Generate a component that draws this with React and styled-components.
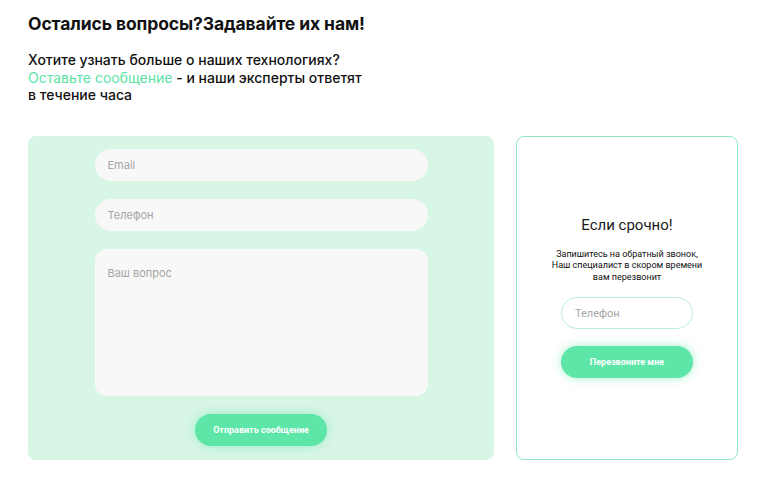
import React from 'react'
import styled, { createGlobalStyle } from 'styled-components'

const GlobalStyle = createGlobalStyle`
  body {
    margin: 0;
    background: #ffffff;
    font-family: Inter, "Noto Sans", sans-serif;
    color: #111;
  }
  * { box-sizing: border-box; }
`

const App = () => {
  return (
    <Page>
      <GlobalStyle />
      <Title>Остались вопросы?Задавайте их нам!</Title>
      <Lead>
        Хотите узнать больше о наших технологиях?
        <br />
        <Accent>Оставьте сообщение</Accent> - и наши эксперты ответят
        <br />
        в течение часа
      </Lead>
      <Row>
        <FormPanel>
          <Field placeholder="Email" />
          <Field placeholder="Телефон" />
          <Area placeholder="Ваш вопрос" />
          <Button wide="132px">Отправить сообщение</Button>
        </FormPanel>
        <Urgent>
          <UrgentTitle>Если срочно!</UrgentTitle>
          <UrgentText>
            Запишитесь на обратный звонок,
            <br />
            Наш специалист в скором времени
            <br />
            вам перезвонит
          </UrgentText>
          <OutlineField placeholder="Телефон" />
          <Button wide="132px">Перезвоните мне</Button>
        </Urgent>
      </Row>
    </Page>
  )
}

export default App

const Page = styled.div`
  padding: 13px 36px 0 28px;
  width: 774px;
`

const Title = styled.h1`
  margin: 0;
  font-size: 17.5px;
  font-weight: 700;
  line-height: 22px;
  letter-spacing: -0.1px;
`

const Lead = styled.p`
  margin: 16px 0 0;
  font-size: 14px;
  font-weight: 500;
  line-height: 17.5px;
`

const Accent = styled.span`
  color: #5be3a7;
  font-weight: 400;
`

const Row = styled.div`
  display: flex;
  gap: 22px;
  margin-top: 32px;
`

const FormPanel = styled.div`
  width: 466px;
  height: 324px;
  background: #d8f6e6;
  border-radius: 8px;
  display: flex;
  flex-direction: column;
  align-items: center;
  padding-top: 13px;
`

const Field = styled.input`
  width: 333px;
  height: 32px;
  border: none;
  border-radius: 16px;
  background: #f8f8f8;
  padding: 0 13px;
  font-family: Inter, sans-serif;
  font-size: 11px;
  outline: none;
  margin-bottom: 18px;
  &::placeholder { color: #a5a5a5; }
`

const Area = styled.textarea`
  width: 333px;
  height: 147px;
  border: none;
  border-radius: 12px;
  background: #f8f8f8;
  padding: 17px 13px;
  font-family: Inter, sans-serif;
  font-size: 11px;
  resize: none;
  outline: none;
  &::placeholder { color: #a5a5a5; }
`

const Button = styled.button`
  width: ${p => p.wide};
  height: 32px;
  border: none;
  border-radius: 16px;
  background: #5de6a8;
  color: #fff;
  font-family: Roboto, sans-serif;
  font-size: 9px;
  font-weight: 700;
  box-shadow: 0 0 10px rgba(93, 230, 168, 0.55);
  cursor: pointer;
  ${FormPanel} & { margin-top: 18px; }
`

const Urgent = styled.div`
  width: 222px;
  height: 324px;
  border: 1px solid #8fe9bd;
  border-radius: 8px;
  display: flex;
  flex-direction: column;
  align-items: center;
  padding-top: 78px;
`

const UrgentTitle = styled.h2`
  margin: 0;
  font-family: Roboto, sans-serif;
  font-size: 15px;
  font-weight: 400;
  line-height: 20px;
  color: #1a1a1a;
`

const UrgentText = styled.p`
  margin: 14px 0 0;
  font-family: Roboto, sans-serif;
  font-size: 9px;
  line-height: 11.5px;
  text-align: center;
  color: #111;
`

const OutlineField = styled.input`
  width: 132px;
  height: 32px;
  margin: 14px 0 17px;
  border: 1px solid #b9f0d5;
  border-radius: 16px;
  background: #fff;
  padding: 0 13px;
  font-family: Roboto, sans-serif;
  font-size: 11px;
  outline: none;
  &::placeholder { color: #a5a5a5; }
`
